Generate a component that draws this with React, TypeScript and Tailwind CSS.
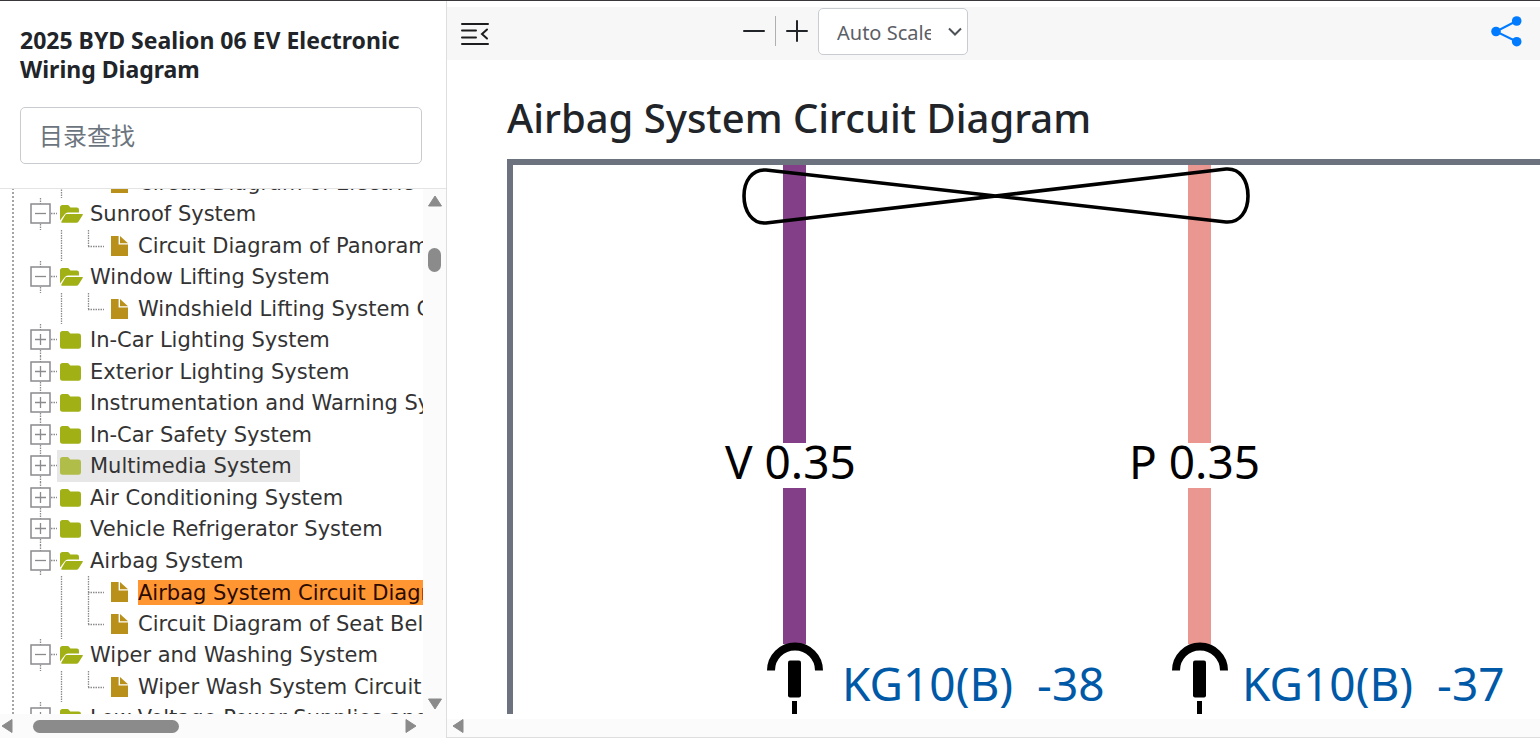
import React, { useState } from "react";

type Row = {
  kind: "open" | "closed" | "file";
  label: string;
  last?: boolean;
};

const rows: Row[] = [
  { kind: "file", label: "Circuit Diagram of Electric", last: true },
  { kind: "open", label: "Sunroof System" },
  { kind: "file", label: "Circuit Diagram of Panoramic Sunroof", last: true },
  { kind: "open", label: "Window Lifting System" },
  { kind: "file", label: "Windshield Lifting System Circuit", last: true },
  { kind: "closed", label: "In-Car Lighting System" },
  { kind: "closed", label: "Exterior Lighting System" },
  { kind: "closed", label: "Instrumentation and Warning System" },
  { kind: "closed", label: "In-Car Safety System" },
  { kind: "closed", label: "Multimedia System" },
  { kind: "closed", label: "Air Conditioning System" },
  { kind: "closed", label: "Vehicle Refrigerator System" },
  { kind: "open", label: "Airbag System" },
  { kind: "file", label: "Airbag System Circuit Diagram" },
  { kind: "file", label: "Circuit Diagram of Seat Belt", last: true },
  { kind: "open", label: "Wiper and Washing System" },
  { kind: "file", label: "Wiper Wash System Circuit Diagram", last: true },
  { kind: "closed", label: "Low-Voltage Power Supplies and" },
];

function ExpanderIcon({ open }: { open: boolean }) {
  return (
    <svg width="27" height="32" viewBox="0 0 27 32" fill="none" stroke="#8a8a8f">
      <path d="M10.5 0V6M10.5 26V32M21 15.5H27" strokeDasharray="1.5 1" strokeWidth="1.3" />
      <rect x="1" y="6" width="19" height="19" strokeWidth="1.5" fill="#fff" />
      <path d={open ? "M5 15.5H16" : "M5 15.5H16M10.5 10V21"} strokeWidth="1.3" />
    </svg>
  );
}

function FolderIcon({ open }: { open: boolean }) {
  return (
    <svg width="24" height="18" viewBox="0 0 24 18" fill="#a0b015">
      {open ? (
        <>
          <path d="M0 2.5Q0 0 2.5 0H7.5Q8.6 0 9.4 1.2L10.4 2.6H16.8Q19 2.6 19 4.8V7.4H8Q5.8 7.4 4.5 9.4L0 15.4Z" />
          <path d="M6.8 9H22.2Q23.4 9 22.7 10.1L18.6 16.4Q17.8 17.8 16.2 17.8H2.2Q.6 17.8 1.4 16.4L5 10.2Q5.6 9 6.8 9Z" />
        </>
      ) : (
        <path d="M0 2.5Q0 0 2.5 0H7.2Q8.4 0 9.2 1.2L10.2 2.6H18.6Q21 2.6 21 5V15.2Q21 17.7 18.6 17.7H2.5Q0 17.7 0 15.2Z" />
      )}
    </svg>
  );
}

function BranchLines({ last }: { last?: boolean }) {
  return (
    <svg
      width="50"
      height="32"
      viewBox="0 0 50 32"
      fill="none"
      stroke="#8a8a8f"
      strokeWidth="1.3"
      strokeDasharray="1.5 1"
    >
      <path d="M1.5 0V32" />
      <path d={last ? "M28.5 0V16" : "M28.5 0V32"} />
      <path d="M28 16.5H44" />
    </svg>
  );
}

function FileIcon() {
  return (
    <svg width="18" height="20" viewBox="0 0 18 20" fill="#b8901a">
      <path d="M0 0H7.6V8.6H17V20H0Z" />
      <path d="M9 0L17 7.3H9Z" />
    </svg>
  );
}

function TreeRow({ row }: { row: Row }) {
  const selected = row.label == "Airbag System Circuit Diagram";
  const hovered = row.label == "Multimedia System";

  if (row.kind == "file") {
    return (
      <li className="flex items-center overflow-hidden odd:h-[31px] even:h-8 pl-[46px]">
        <span className="shrink-0">
          <BranchLines last={row.last} />
        </span>
        <a href="#" className="flex items-center gap-2">
          <span className="w-5 shrink-0 pl-px">
            <FileIcon />
          </span>
          <span
            className={
              selected
                ? "bg-[#ff9632] pt-[2px] leading-[23px] text-[#2b0a00]"
                : "pt-[2px] leading-[23px]"
            }
          >
            {row.label}
          </span>
        </a>
      </li>
    );
  }

  return (
    <li className="flex items-center overflow-hidden odd:h-[31px] even:h-8 pl-4">
      <button type="button" aria-label={"Toggle " + row.label} className="shrink-0">
        <ExpanderIcon open={row.kind == "open"} />
      </button>
      <a
        href="#"
        className={
          hovered
            ? "flex h-full items-center gap-[6px] bg-[#e7e7e7] pl-[3px] pr-2"
            : "flex h-full items-center gap-[6px] pl-[3px] pr-2"
        }
      >
        <span className={hovered ? "shrink-0 opacity-75" : "shrink-0"}>
          <FolderIcon open={row.kind == "open"} />
        </span>
        <span className="pt-[2px]">{row.label}</span>
      </a>
    </li>
  );
}

function Arrow({ dir }: { dir: "up" | "down" | "left" | "right" }) {
  const paths = {
    up: "M7 2L13.5 12H.5Z",
    down: "M7 12L.5 2H13.5Z",
    left: "M2 7L12 .5V13.5Z",
    right: "M12 7L2 .5V13.5Z",
  };
  return (
    <svg width="14" height="14" viewBox="0 0 14 14" fill="#8b8b8b" stroke="#8b8b8b" strokeLinejoin="round">
      <path d={paths[dir]} />
    </svg>
  );
}

function Sidebar() {
  const [search, setSearch] = useState("");

  return (
    <aside className="flex w-[447px] shrink-0 flex-col border-r border-[#dedede]">
      <div className="border-b border-[#e4e4e4] px-5 pt-[25px] pb-6">
        <h1 className="text-[23px] leading-[29px] font-bold text-[#212529]">
          2025 BYD Sealion 06 EV Electronic Wiring Diagram
        </h1>
        <input
          aria-label="目录查找"
          placeholder="目录查找"
          value={search}
          onChange={(e) => setSearch(e.target.value)}
          className="mt-[23px] block h-[57px] w-[402px] rounded-[5px] border border-[#c8ccd0] bg-white px-[18px] text-2xl text-[#495057] placeholder:text-[#6c757d]"
        />
      </div>
      <div className="flex min-h-0 flex-1">
        <div className="min-w-0 flex-1 overflow-hidden pl-3">
          <ul className="-mt-[22px] border-l-2 border-dotted border-[#a5a5a8] font-['DejaVu_Sans',Verdana,sans-serif] text-[21px] whitespace-nowrap text-[#333]">
            {rows.map((row) => (
              <TreeRow key={row.label} row={row} />
            ))}
          </ul>
        </div>
        <div className="flex w-[23px] flex-col items-center bg-[#fbfbfb] pt-[5px] pb-[3px]">
          <Arrow dir="up" />
          <div className="mt-10 h-6 w-[13px] rounded-full bg-[#8b8b8b]"></div>
          <div className="mt-auto">
            <Arrow dir="down" />
          </div>
        </div>
      </div>
      <div className="flex h-6 items-center bg-[#fbfbfb] pr-7">
        <Arrow dir="left" />
        <div className="ml-[19px] h-[13px] w-[146px] rounded-full bg-[#8b8b8b]"></div>
        <div className="ml-auto">
          <Arrow dir="right" />
        </div>
      </div>
    </aside>
  );
}

function Toolbar() {
  return (
    <div className="flex h-[53px] shrink-0 items-start bg-[#f7f7f7] pr-[18px] pl-[14px]">
      <button type="button" aria-label="Collapse menu" className="flex h-[54px] items-center">
        <svg width="28" height="24" viewBox="0 0 28 24" fill="none" stroke="#1d1d1f" strokeWidth="2" strokeLinecap="round">
          <path d="M1 2H27M1 8.5H15M1 15.5H15M1 22H27M26 7.5L21 12L26 16.5" />
        </svg>
      </button>
      <div className="ml-[254px] flex h-12 items-center">
        <button type="button" aria-label="Zoom out">
          <svg width="22" height="22" viewBox="0 0 22 22" stroke="#212529" strokeWidth="2" strokeLinecap="round">
            <path d="M1 11H21" />
          </svg>
        </button>
        <div className="mx-[10px] h-[30px] w-px bg-[#b0b0b0]"></div>
        <button type="button" aria-label="Zoom in">
          <svg width="22" height="22" viewBox="0 0 22 22" stroke="#212529" strokeWidth="2" strokeLinecap="round">
            <path d="M1 11H21M11 1V21" />
          </svg>
        </button>
        <div className="relative ml-[10px] pt-px">
          <select
            aria-label="Scale"
            className="block h-[47px] w-[150px] appearance-none rounded-[5px] border border-[#c8ccd0] bg-white pt-[2px] pr-9 pl-[18px] text-xl text-[#5b6066]"
          >
            <option>Auto Scale</option>
            <option>50%</option>
            <option>100%</option>
          </select>
          <svg className="pointer-events-none absolute top-5 right-[6px]" width="14" height="10" viewBox="0 0 14 10" fill="none" stroke="#4d5257" strokeWidth="2">
            <path d="M1 1.5L7 7.5L13 1.5" />
          </svg>
        </div>
      </div>
      <button type="button" aria-label="Share" className="ml-auto flex h-12 items-center">
        <svg width="31" height="31" viewBox="0 0 31 31" fill="#007bff">
          <path d="M25.5 5L5 15.5L25.5 25.5" fill="none" stroke="#007bff" strokeWidth="2" />
          <circle cx="25.7" cy="5" r="4.8" />
          <circle cx="5" cy="15.5" r="4.8" />
          <circle cx="25.7" cy="25.7" r="4.8" />
        </svg>
      </button>
    </div>
  );
}

// one wire with its gauge label and connector pin at the bottom
function Wire(props: { x: number; color: string; gauge: string; gaugeX: number; pin: string; pinX: number }) {
  const { x, color, gauge, gaugeX, pin, pinX } = props;
  return (
    <g>
      <rect x={x - 12} y="0" width="23" height="278" fill={color} />
      <rect x={x - 12} y="323" width="23" height="156" fill={color} />
      <text x={gaugeX} y="314" fontSize="46">
        {gauge}
      </text>
      <path d={`M${x - 24} 505.5A24 24 0 0 1 ${x + 24} 505.5`} fill="none" stroke="#000" strokeWidth="8" />
      <rect x={x - 7} y="495.5" width="13" height="37" rx="2" />
      <rect x={x - 3} y="536" width="5" height="13" />
      <a href="#">
        <text x={pinX} y="536" fontSize="46" fill="#0059a6" xmlSpace="preserve">
          {pin}
        </text>
      </a>
    </g>
  );
}

function Diagram() {
  return (
    <svg width="1400" height="549" viewBox="0 0 1400 549" className="block">
      <Wire x={282} color="#833f87" gauge="V 0.35" gaugeX={212} pin="KG10(B)  -38" pinX={329} />
      <Wire x={687} color="#ea9691" gauge="P 0.35" gaugeX={616} pin="KG10(B)  -37" pinX={729} />
      <path
        d="M253 5L713 57C727 58 735 46 735 31C735 15 727 3 713 4L253 58C239 59 231 46 231 31C231 16 239 4 253 5Z"
        fill="none"
        stroke="#000"
        strokeWidth="3.6"
      />
    </svg>
  );
}

export default function App() {
  return (
    <div className="flex h-screen overflow-hidden border-t border-[#3a373b] bg-white pb-[3px] font-['Segoe_UI','Noto_Sans','Noto_Sans_CJK_SC',sans-serif]">
      <Sidebar />
      <main className="flex min-w-0 flex-1 flex-col border-b border-[#dedede] pt-[6px]">
        <Toolbar />
        <div className="min-h-0 flex-1 overflow-hidden pt-8 pl-[60px]">
          <h2 className="text-[40px] leading-[52px] font-medium whitespace-nowrap text-[#212529]">
            Airbag System Circuit Diagram
          </h2>
          <div className="mt-[15px] border-t-[6px] border-l-[6px] border-[#6c737e]">
            <Diagram />
          </div>
        </div>
        <div className="flex h-[18px] shrink-0 items-start bg-[#fbfbfb] pl-1">
          <Arrow dir="left" />
        </div>
      </main>
    </div>
  );
}
